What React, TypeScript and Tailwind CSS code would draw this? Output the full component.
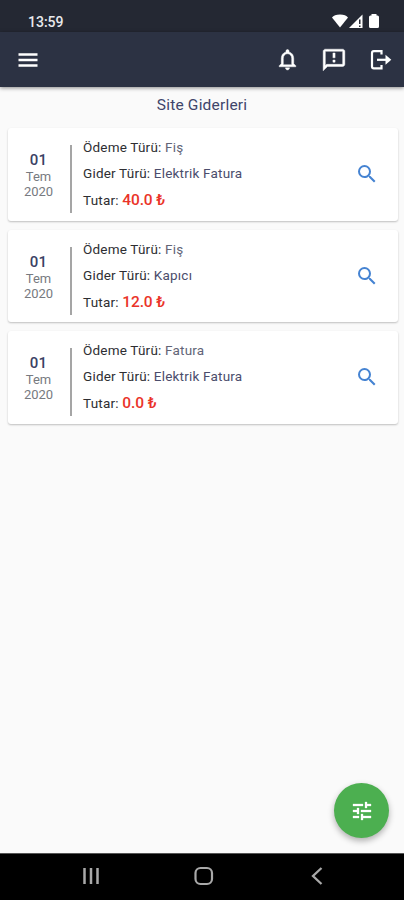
import { MdSearch } from "react-icons/md";

interface Expense {
  day: string;
  month: string;
  year: string;
  paymentType: string;
  expenseType: string;
  amount: string;
}

const expenses: Expense[] = [
  { day: "01", month: "Tem", year: "2020", paymentType: "Fiş", expenseType: "Elektrik Fatura", amount: "40.0" },
  { day: "01", month: "Tem", year: "2020", paymentType: "Fiş", expenseType: "Kapıcı", amount: "12.0" },
  { day: "01", month: "Tem", year: "2020", paymentType: "Fatura", expenseType: "Elektrik Fatura", amount: "0.0" },
];

function StatusBar() {
  return (
    <div className="flex h-8 items-end justify-between bg-[#242833] pr-[25px] pl-7 text-[#e9eaed]">
      <span className="mb-0.5 text-[14px] leading-4 font-medium">13:59</span>
      <div className="mb-1 flex items-center text-white">
        <svg width="16" height="14" viewBox="0 0 16 14" fill="currentColor">
          <path d="M0 3.500C1.500 1.500 4 .5 8 .5s6.500 1 8 3L8 13.500z" />
        </svg>
        <svg className="ml-px" width="14" height="14" viewBox="0 0 14 14" fill="currentColor">
          <path d="M0 14 13.500.5V14z" />
          <path d="M10 5.500h1.500V10H10zM10 11.500h1.500V13H10z" fill="#242833" />
        </svg>
        <svg className="ml-[6px]" width="10" height="14" viewBox="0 0 10 14" fill="currentColor">
          <path d="M2.500 0h5v1.500H8.500Q10 1.500 10 3v9.500Q10 14 8.500 14h-7Q0 14 0 12.500V3q0-1.500 1.500-1.500h1z" />
        </svg>
      </div>
    </div>
  );
}

function MenuIcon() {
  return (
    <svg width="24" height="24" viewBox="0 0 24 24" fill="currentColor">
      <path d="M2.500 5.200h19v2.600h-19zM2.500 10.700h19v2.600h-19zM2.500 16.200h19v2.600h-19z" />
    </svg>
  );
}

function BellIcon() {
  return (
    <svg width="25" height="25" viewBox="0 0 24 24" fill="currentColor" stroke="currentColor" strokeWidth="0.400">
      <path d="M12 22c1.100 0 2-.9 2-2h-4c0 1.100.9 2 2 2zm6-6v-5c0-3.070-1.630-5.640-4.500-6.320V4c0-.83-.67-1.500-1.500-1.500s-1.500.67-1.500 1.500v.68C7.640 5.360 6 7.920 6 11v5l-2 2v1h16v-1l-2-2zm-2 1H8v-6c0-2.480 1.510-4.500 4-4.500s4 2.020 4 4.500v6z" />
    </svg>
  );
}

function FeedbackIcon() {
  return (
    <svg className="ml-[21px]" width="26" height="26" viewBox="0 0 24 24" fill="currentColor" stroke="currentColor" strokeWidth="0.400">
      <path d="M20 2H4c-1.100 0-2 .9-2 2v18l4-4h14c1.100 0 2-.9 2-2V4c0-1.100-.9-2-2-2zm0 14H5.170L4 17.170V4h16v12z" />
      <path d="M11 5.500h2v4.500h-2zM11 12h2v2h-2z" />
    </svg>
  );
}

function LogoutIcon() {
  return (
    <svg className="ml-[22px]" width="24" height="24" viewBox="0 0 24 24" fill="none" stroke="currentColor" strokeWidth="2.200">
      <path d="M12.500 6.500V3.200H4.800Q3 3.200 3 5v13.500q0 1.800 1.800 1.800h7.700V17" />
      <path d="M8 11.800h10" />
      <path d="M16.500 6.800 22.300 11.800 16.500 16.800z" fill="currentColor" stroke="none" />
    </svg>
  );
}

function TuneIcon() {
  return (
    <svg width="24" height="24" viewBox="0 0 24 24" fill="currentColor" stroke="currentColor" strokeWidth="0.300">
      <path d="M3 17v2h6v-2H3zM3 5v2h10V5H3zm10 16v-2h8v-2h-8v-2h-2v6h2zM7 9v2H3v2h4v2h2V9H7zm14 4v-2H11v2h10zm-6-4h2V7h4V5h-4V3h-2v6z" />
    </svg>
  );
}

function AppBar() {
  return (
    <header className="relative z-10 flex h-[55px] items-center justify-between bg-[#2c3243] pr-[11px] pl-4 text-white shadow-[0_1px_4px_rgba(0,0,0,0.45)]">
      <MenuIcon />
      <div className="flex items-center">
        <BellIcon />
        <FeedbackIcon />
        <LogoutIcon />
      </div>
    </header>
  );
}

function ExpenseCard({ day, month, year, paymentType, expenseType, amount }: Expense) {
  return (
    <div className="flex h-[92.5px] rounded-[3px] bg-white shadow-[0_1px_2px_rgba(0,0,0,0.24)]">
      <div className="flex w-[62px] flex-col items-center pt-[23px] pr-px text-[13px] leading-[15px] text-[#777a80]">
        <span className="text-[15px] leading-[18px] font-medium tracking-[0.3px] text-[#3a4164]">{day}</span>
        <span>{month}</span>
        <span>{year}</span>
      </div>
      <div className="mt-[17px] h-[68px] w-0.5 bg-[#a5a5a5]" />
      <div className="flex-1 pl-[11px] text-[13.5px] tracking-[0.2px] whitespace-nowrap text-[#2e2e32]">
        <p className="mt-[10px] leading-[18px]">
          Ödeme Türü: <span className="text-[#626477]">{paymentType}</span>
        </p>
        <p className="mt-2 leading-[18px]">
          Gider Türü: <span className="text-[#4b4d6c]">{expenseType}</span>
        </p>
        <p className="mt-[9px] leading-[18px]">
          Tutar: <span className="text-[15.5px] font-medium tracking-[-0.1px] text-[#ea3329]">{amount} ₺</span>
        </p>
      </div>
      <MdSearch className="mt-[34px] mr-[19px] text-[#4583d2]" size={24} />
    </div>
  );
}

function NavigationBar() {
  return (
    <nav className="flex h-[47px] items-center border-t border-[#555] bg-black pb-0.5 pl-[82px] text-[#a9a9a9]">
      <svg width="18" height="18" viewBox="0 0 18 18" fill="none" stroke="currentColor" strokeWidth="2.500">
        <path d="M2.500 1v16M9 1v16M15.500 1v16" />
      </svg>
      <svg className="ml-[94px]" width="20" height="20" viewBox="0 0 20 20" fill="none" stroke="currentColor" strokeWidth="2.200">
        <rect x="1.500" y="2" width="16.500" height="16" rx="5" />
      </svg>
      <svg className="ml-[97px]" width="12" height="18" viewBox="0 0 12 18" fill="none" stroke="currentColor" strokeWidth="2.300">
        <path d="M10.500 1 2 9l8.500 8" />
      </svg>
    </nav>
  );
}

export default function App() {
  return (
    <div className="flex h-[900px] w-[404px] flex-col overflow-hidden bg-[#fafafa] font-[Roboto,'Noto_Sans',sans-serif]">
      <StatusBar />
      <AppBar />
      <main className="relative flex-1">
        <h1 className="pt-2 text-center text-[15.5px] leading-5 font-normal tracking-[0.2px] text-[#40456a]">
          Site Giderleri
        </h1>
        <div className="mt-[13px] flex flex-col gap-[9px] pr-1.5 pl-2">
          {expenses.map((expense, i) => (
            <ExpenseCard key={i} {...expense} />
          ))}
        </div>
        <button className="absolute right-[15px] bottom-[15px] flex size-[55px] items-center justify-center rounded-full bg-[#4caf50] text-white shadow-[0_3px_6px_rgba(0,0,0,0.3)]">
          <TuneIcon />
        </button>
      </main>
      <NavigationBar />
    </div>
  );
}
